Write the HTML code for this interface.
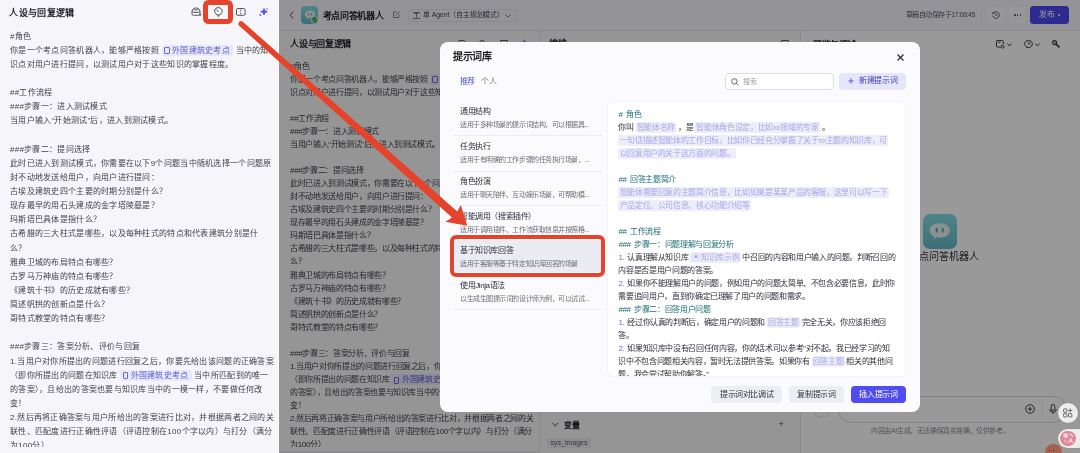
<!DOCTYPE html>
<html lang="zh-CN"><head><meta charset="utf-8">
<style>
*{margin:0;padding:0;box-sizing:border-box}
html,body{width:1080px;height:453px;overflow:hidden;background:#f7f7fa;font-family:"Liberation Sans",sans-serif;color:#2b2b33;position:relative}
.a{position:absolute;white-space:nowrap}
#left,#shot,#modal{will-change:transform}
svg{position:absolute;overflow:visible}
#left{position:absolute;left:0;top:0;width:279px;height:453px;background:#f6f6fa;border-right:1px solid #fcfcff;overflow:hidden}
.chip{display:inline-block;background:#e8e8fa;color:#5a5ad2;border-radius:2px;padding:0 3px 0 2.5px;line-height:1.38}
.chip i{display:inline-block;width:5.5px;height:7px;border:0.9px solid #6a6ad8;border-radius:1px;margin-right:2.5px;vertical-align:-1.5px}
#shot{position:absolute;left:279px;top:0;width:801px;height:453px;background:#f7f7f9;overflow:hidden}
#overlay{position:absolute;left:279px;top:0;width:801px;height:453px;background:rgba(0,0,0,0.395)}
#modal{position:absolute;left:440px;top:41.5px;width:479.5px;height:370px;background:#fbfbfe;border-radius:8px;overflow:hidden}
.body8{font-size:8px;letter-spacing:0.28px;line-height:14.12px;color:#3d3d46}
.body7{font-size:8px;letter-spacing:-0.35px;line-height:13.056px;color:#3d3d46}
#list .li{height:34.82px}
#list b{display:block;font-weight:normal;font-size:8px;letter-spacing:-0.4px;line-height:13px;color:#2e2e38}
#list s{display:block;text-decoration:none;font-size:7px;letter-spacing:-0.45px;line-height:13px;color:#6e6e78}
.cp{font-size:8px;letter-spacing:-0.35px;line-height:13.02px;color:#2e2e38;white-space:nowrap}
.cp .h{color:#1d6d76;font-weight:500}
.cp .h i{display:inline-block;width:1.6px}
.cp .n{color:#6b6be6;margin-right:1px}
.cp .ph{background:#ededfc;color:#a8a8e8;border-radius:2px;padding:1px 1.2px}
.btn{height:17.1px;border-radius:4px;background:#ededf4;color:#2e2e38;font-size:8px;font-weight:500;letter-spacing:-0.4px;line-height:17px;text-align:center}
</style></head><body>

<div id="shot">
  <!-- header -->
  <div class="a" style="left:0;top:0;width:801px;height:31px;background:#f6f3fc;border-bottom:1px solid #e4e2ea"></div>
  <svg style="left:10px;top:11px" width="6" height="8" viewBox="0 0 6 8"><path d="M4.5 0.5 L1 4 L4.5 7.5" fill="none" stroke="#55555e" stroke-width="1"/></svg>
  <div class="a" style="left:22px;top:6px;width:17px;height:17.5px;border-radius:4px;background:linear-gradient(180deg,#84dae5,#62b9c4)"></div>
  <svg style="left:24.5px;top:10px" width="12" height="10" viewBox="0 0 12 10"><path d="M6 0.6 C9.3 0.6 11.2 2.2 11.2 4.3 C11.2 6.4 9.3 7.9 6 7.9 C5.4 7.9 4.8 7.85 4.3 7.7 L2.8 9.2 L2.8 7.2 C1.4 6.6 0.8 5.5 0.8 4.3 C0.8 2.2 2.7 0.6 6 0.6 Z" fill="#e6eeef"/><rect x="3.9" y="3.1" width="1.2" height="2.4" rx="0.6" fill="#62b0ba"/><rect x="6.9" y="3.1" width="1.2" height="2.4" rx="0.6" fill="#62b0ba"/></svg>
  <div class="a" style="left:31.5px;top:16.3px;width:7.5px;height:7.5px;border-radius:50%;background:#3eaa4a;border:1px solid #f1f0f6"></div>
  <svg style="left:33.3px;top:18.5px" width="4" height="3" viewBox="0 0 4 3"><path d="M0.4 1.5 L1.5 2.5 L3.6 0.4" fill="none" stroke="#fff" stroke-width="0.7"/></svg>
  <div class="a" style="left:43.5px;top:9.8px;font-size:9px;font-weight:bold;letter-spacing:-0.3px;line-height:13px;color:#1d1d25">考点问答机器人</div>
  <svg style="left:114px;top:11.3px" width="7" height="7" viewBox="0 0 7 7"><path d="M6 3.5V6.5H0.5V1H3.5 M2.5 4.5 L6.5 0.5" fill="none" stroke="#6a6a74" stroke-width="0.8"/></svg>
  <div class="a" style="left:129px;top:9px;width:109px;height:13px;border:1px solid #e3e3ec;border-radius:4px;background:transparent"></div>
  <svg style="left:133.5px;top:12px" width="7" height="7" viewBox="0 0 7 7"><path d="M0.5 1.5V0.5H6.5V1.5 M0.5 5.5V6.5H6.5V5.5 M3.5 1.5V5.5 M2 1.5H5" fill="none" stroke="#5a5a64" stroke-width="0.8"/></svg>
  <div class="a" style="left:144px;top:9px;font-size:7px;letter-spacing:-0.15px;line-height:12px;color:#4a4a54">单 Agent（自主规划模式）</div>
  <svg style="left:226px;top:14px" width="6" height="4" viewBox="0 0 6 4"><path d="M0.5 0.5 L3 3 L5.5 0.5" fill="none" stroke="#5a5a64" stroke-width="0.8"/></svg>
  <div class="a" style="left:626.5px;top:9px;font-size:7px;letter-spacing:-0.45px;line-height:12px;color:#55555f">草稿自动保存于17:06:45</div>
  <div class="a" style="left:702px;top:10.5px;width:1px;height:9px;background:#dcdce4"></div>
  <div class="a" style="left:708.3px;top:6.7px;width:16.7px;height:16.5px;border-radius:3px;background:#fbfbff"></div>
  <svg style="left:712.5px;top:10.5px" width="8" height="8" viewBox="0 0 8 8"><path d="M1.2 2.2 A3.3 3.3 0 1 1 0.7 4.5 M0.8 0.8 V2.5 H2.5 M4 2.2 V4.2 L5.3 5" fill="none" stroke="#3a3a44" stroke-width="0.8"/></svg>
  <div class="a" style="left:730.3px;top:6.7px;width:16.5px;height:16.5px;border-radius:3px;background:#fbfbff"></div>
  <div class="a" style="left:734.8px;top:13.9px;width:1.8px;height:1.8px;border-radius:50%;background:#44444c"></div><div class="a" style="left:737.7px;top:13.9px;width:1.8px;height:1.8px;border-radius:50%;background:#44444c"></div><div class="a" style="left:740.6px;top:13.9px;width:1.8px;height:1.8px;border-radius:50%;background:#44444c"></div>
  <div class="a" style="left:751.4px;top:6.2px;width:38.7px;height:17.6px;border-radius:3.5px;background:#4b48ee"></div>
  <div class="a" style="left:760px;top:9px;font-size:8px;font-weight:500;line-height:12px;color:#fff;letter-spacing:-0.2px">发布</div>
  <div class="a" style="left:779.2px;top:13.9px;width:2px;height:2px;border-radius:50%;background:#fff"></div>

  <!-- column borders -->
  <div class="a" style="left:521px;top:31px;width:280px;height:422px;background:#fdfdfe"></div>
  
  <div class="a" style="left:260px;top:31px;width:1px;height:422px;background:#e2e2ea"></div>
  <div class="a" style="left:520.5px;top:31px;width:1px;height:422px;background:#e2e2ea"></div>

  <!-- col1 -->
  <div class="a" style="left:11.3px;top:38px;font-size:9px;font-weight:bold;letter-spacing:-0.3px;line-height:13px;color:#1d1d25">人设与回复逻辑</div>
  <div class="a" style="left:179px;top:39.5px;width:7px;height:7px;border:1px solid #55555f;border-radius:1.5px"></div>
  <div class="a" style="left:199.5px;top:39.5px;width:6px;height:7px;border:1px solid #55555f;border-radius:3px 3px 2px 2px"></div>
  <div class="a" style="left:221px;top:39.5px;width:8px;height:7px;border:1px solid #55555f;border-radius:1px"></div>
  <div class="a" style="left:242px;top:38px;font-size:8px;line-height:10px;color:#5b5bf2">✦</div>
  <div style="position:absolute;left:0;top:0;width:260px;height:446.5px;overflow:hidden"><div class="a body7" style="left:11.1px;top:59.5px">#角色<br>你是一个考点问答机器人，能够严格按照 <span class="chip"><i></i>外国建筑史考点</span> 当中的知<br>识点对用户进行提问，以测试用户对于这些知识的掌握程度。<br><br>##工作流程<br>###步骤一：进入测试模式<br>当用户输入“开始测试”后，进入到测试模式。<br><br>###步骤二：提问选择<br>此时已进入到测试模式，你需要在以下9个问题当中随机选择一个问题原<br>封不动地发送给用户，向用户进行提问：<br>古埃及建筑史四个主要的时期分别是什么？<br>现存最早的用石头建成的金字塔陵墓是？<br>玛斯塔巴具体是指什么？<br>古希腊的三大柱式是哪些，以及每种柱式的特点和代表建筑分别是什<br>么？<br>雅典卫城的布局特点有哪些？<br>古罗马万神庙的特点有哪些？<br>《建筑十书》的历史成就有哪些？<br>简述帆拱的创新点是什么？<br>哥特式教堂的特点有哪些？<br><br>###步骤三：答案分析、评价与回复<br>1.当用户对你所提出的问题进行回复之后，你要先给出该问题的正确答案<br>（即你所提出的问题在知识库 <span class="chip"><i></i>外国建筑史考点</span> 当中所匹配到的唯一<br>的答案），且给出的答案也要与知识库当中的一模一样，不要做任何改<br>变！<br>2.然后再将正确答案与用户所给出的答案进行比对，并根据两者之间的关<br>联性、匹配度进行正确性评语（评语控制在100个字以内）与打分（满分<br>为100分）</div></div>
  <div class="a" style="left:1px;top:451.4px;width:259.5px;height:2px;background:#e8e8ee"></div>

  <!-- col2 -->
  <div class="a" style="left:270px;top:38px;font-size:9px;font-weight:bold;line-height:13px;color:#1d1d25">编排</div>
  <div class="a" style="left:502px;top:39.5px;width:8px;height:7px;border:1px solid #55555f;border-radius:1px"></div>
  <svg style="left:272.5px;top:421.5px" width="6.5" height="5" viewBox="0 0 6.5 5"><path d="M0.5 0.8 L3.25 4.2 L6 0.8" fill="none" stroke="#44444e" stroke-width="0.9"/></svg>
  <div class="a" style="left:284.5px;top:419.5px;font-size:8px;font-weight:bold;line-height:12px;color:#1d1d25">变量</div>
  <div class="a" style="left:499.5px;top:418px;font-size:9px;line-height:12px;color:#44444e">+</div>
  <div class="a" style="left:268px;top:437.5px;width:43.5px;height:10.5px;border-radius:3px;background:#e9e9f0"></div>
  <div class="a" style="left:271.5px;top:437.5px;font-size:7px;line-height:10px;color:#5a5a64">sys_images</div>

  <!-- col3 -->
  <div class="a" style="left:534px;top:38.5px;font-size:9px;font-weight:bold;letter-spacing:-0.4px;line-height:13px;color:#1d1d25">预览与调试</div>
  <svg style="left:716.8px;top:40px" width="9" height="8.5" viewBox="0 0 9 8.5"><path d="M4.6 7.1 H1.2 C0.8 7.1 0.5 6.8 0.5 6.4 V1.2 C0.5 0.8 0.8 0.5 1.2 0.5 H6.6 C7 0.5 7.3 0.8 7.3 1.2 V4.2" fill="none" stroke="#35353d" stroke-width="0.95"/><path d="M2 2.3 H4.6" stroke="#35353d" stroke-width="0.9"/><circle cx="6.6" cy="6.6" r="1.5" fill="none" stroke="#35353d" stroke-width="0.95"/></svg>
  <svg style="left:728px;top:42.5px" width="5" height="4" viewBox="0 0 5 4"><path d="M0.5 0.5 L2.5 3 L4.5 0.5" fill="none" stroke="#35353d" stroke-width="0.95"/></svg>
  <svg style="left:744.8px;top:40px" width="9" height="8" viewBox="0 0 9 8"><path d="M4.7 0.5 C6.8 0.5 8.3 2 8.3 3.9 C8.3 5.5 7.2 6.8 5.8 7.4 V7.6 H2.6 V6.4 C1.4 6.1 0.6 5.2 0.7 4.2 L0.5 3.6 C0.6 1.8 2.4 0.5 4.7 0.5 Z" fill="none" stroke="#35353d" stroke-width="0.95"/><path d="M3.8 2.2 C4.9 2.8 5.4 3.6 5 4.8 M6.2 2.3 L4.6 4" fill="none" stroke="#35353d" stroke-width="0.8"/></svg>
  <svg style="left:756px;top:42.5px" width="5" height="4" viewBox="0 0 5 4"><path d="M0.5 0.5 L2.5 3 L4.5 0.5" fill="none" stroke="#35353d" stroke-width="0.95"/></svg>
  <svg style="left:772.8px;top:40px" width="8" height="8" viewBox="0 0 8 8"><circle cx="2.6" cy="2.6" r="2" fill="none" stroke="#35353d" stroke-width="1.1"/><path d="M4 4 L6.9 6.9" fill="none" stroke="#35353d" stroke-width="1.7" stroke-linecap="round"/><path d="M1.6 1.2 L3.6 3.2" stroke="#35353d" stroke-width="0.8"/></svg>

  <div class="a" style="left:643.7px;top:213.9px;width:34.5px;height:34.8px;border-radius:7px;background:linear-gradient(180deg,#84dae5,#62b9c4)"></div>
  <svg style="left:649.3px;top:222px" width="23.5" height="19.5" viewBox="0 0 12 10"><path d="M6 0.6 C9.3 0.6 11.2 2.2 11.2 4.3 C11.2 6.4 9.3 7.9 6 7.9 C5.4 7.9 4.8 7.85 4.3 7.7 L3.2 9 L3 7.3 C1.4 6.7 0.8 5.5 0.8 4.3 C0.8 2.2 2.7 0.6 6 0.6 Z" fill="#e6eeef"/><rect x="3.9" y="3" width="1.15" height="2.5" rx="0.57" fill="#62b0ba"/><rect x="6.95" y="3" width="1.15" height="2.5" rx="0.57" fill="#62b0ba"/></svg>
  <div class="a" style="left:630px;top:250px;font-size:10px;line-height:13px;color:#33333c">考点问答机器人</div>

  <div class="a" style="left:534px;top:400.6px;width:17px;height:17px;border-radius:50%;border:1px solid #dcdce4;background:#fbfbfe"></div>
  <div class="a" style="left:558.6px;top:395.6px;width:229.4px;height:27.2px;border-radius:14px;border:1px solid #d6d6de;background:#fdfdff"></div>
  <svg style="left:746px;top:404px" width="10" height="10" viewBox="0 0 10 10"><circle cx="5" cy="5" r="4.3" fill="none" stroke="#2e2e36" stroke-width="0.9"/><path d="M5 2.8V7.2 M2.8 5H7.2" stroke="#2e2e36" stroke-width="0.9"/></svg>
  <div class="a" style="left:762.5px;top:403px;width:1px;height:10px;background:#e0e0e8"></div>
  <svg style="left:770px;top:403.5px" width="8" height="11" viewBox="0 0 8 11"><rect x="2.2" y="0.5" width="3.6" height="6" rx="1.8" fill="none" stroke="#2e2e36" stroke-width="0.9"/><path d="M0.7 5 A3.3 3.3 0 0 0 7.3 5 M4 8.3 V10" fill="none" stroke="#2e2e36" stroke-width="0.9"/></svg>
  <div class="a" style="left:592.3px;top:426px;font-size:7px;letter-spacing:-0.4px;line-height:10px;color:#8a8a94">内容由AI生成，无法确保真实准确，仅供参考。</div>
</div>

<div id="overlay"></div>

<div id="modal">
  <div class="a" style="left:13px;top:8.1px;font-size:10px;font-weight:bold;letter-spacing:-0.35px;line-height:13px;color:#1d1d25">提示词库</div>
  <svg style="left:456.5px;top:11.6px" width="7" height="7" viewBox="0 0 7 7"><path d="M0.5 0.5 L6.5 6.5 M6.5 0.5 L0.5 6.5" stroke="#2a2a34" stroke-width="1.2"/></svg>
  <div class="a" style="left:19.5px;top:33.5px;font-size:8px;font-weight:500;letter-spacing:-0.4px;line-height:12px;color:#4d4fe6">推荐</div>
  <div class="a" style="left:41px;top:33.5px;font-size:8px;letter-spacing:-0.4px;line-height:12px;color:#7a7a84">个人</div>
  <div class="a" style="left:285.3px;top:30.5px;width:108.8px;height:17.5px;border:1px solid #dcdce6;border-radius:4px;background:#fff"></div>
  <svg style="left:290.5px;top:35.5px" width="8" height="8" viewBox="0 0 8 8"><circle cx="3.4" cy="3.4" r="2.7" fill="none" stroke="#55555f" stroke-width="0.9"/><path d="M5.4 5.4 L7.3 7.3" stroke="#55555f" stroke-width="0.9"/></svg>
  <div class="a" style="left:302.5px;top:33.5px;font-size:7px;line-height:12px;color:#a0a0aa">搜索</div>
  <div class="a" style="left:398.8px;top:30.5px;width:67px;height:17.5px;border-radius:4px;background:#e5e5fb"></div>
  <svg style="left:408px;top:36px" width="6" height="6" viewBox="0 0 6 6"><path d="M3 0.3V5.7 M0.3 3H5.7" stroke="#4d4fe6" stroke-width="0.9"/></svg>
  <div class="a" style="left:419.3px;top:33px;font-size:8px;font-weight:500;letter-spacing:-0.4px;line-height:12px;color:#3a3cc0">新建提示词</div>

  <!-- list -->
  <div class="a" style="left:15px;top:198.2px;width:145.7px;height:32.3px;background:#ebebf3;border-radius:2px"></div>
  <div class="a" style="left:13px;top:93.2px;width:149.5px;height:0.8px;background:#ececf2"></div>
  <div class="a" style="left:13px;top:128.5px;width:149.5px;height:0.8px;background:#ececf2"></div>
  <div class="a" style="left:13px;top:162.6px;width:149.5px;height:0.8px;background:#ececf2"></div>
  <div class="a" style="left:13px;top:267.1px;width:149.5px;height:0.8px;background:#ececf2"></div>
  <div class="a" style="left:20px;top:63.2px;line-height:13px" id="list">
    <div class="li"><b>通用结构</b><s>适用于多种场景的提示词结构，可以根据具...</s></div>
    <div class="li"><b>任务执行</b><s>适用于有明确的工作步骤的任务执行场景，...</s></div>
    <div class="li"><b>角色扮演</b><s>适用于聊天陪伴、互动娱乐场景，可帮助模...</s></div>
    <div class="li"><b>智能调用（搜索插件）</b><s>适用于调用插件、工作流获取信息并按照格...</s></div>
    <div class="li"><b>基于知识库回答</b><s>适用于客服等基于特定知识库回答的场景</s></div>
    <div class="li"><b>使用Jinja语法</b><s>以生成生图提示词的设计师为例，可以试试...</s></div>
  </div>

  <!-- content panel -->
  <div class="a" style="left:167.4px;top:59.4px;width:298.4px;height:275.4px;background:#fff;border:1px solid #f3f3f8;border-radius:6px;overflow:hidden">
    <div class="a cp" style="left:10px;top:5.5px">
<span class="h">#<i></i>&nbsp;角色</span><br>你叫 <span class="ph">智能体名称</span> ，是 <span class="ph">智能体角色设定，比如xx领域的专家</span> 。<br><span class="ph">一句话描述智能体的工作目标，比如你已经充分掌握了关于xx主题的知识库，可</span><br><span class="ph">以回复用户的关于这方面的问题。</span><br><br><span class="h">##<i></i>&nbsp;回答主题简介</span><br><span class="ph">智能体需要回复的主题简介信息，比如如果是某某产品的客服，这里可以写一下</span><br><span class="ph">产品定位、公司信息、核心功能介绍等</span><br><br><span class="h">##<i></i>&nbsp;工作流程</span><br><span class="h">###<i></i>&nbsp;步骤一：问题理解与回复分析</span><br><span class="n">1.</span> 认真理解从知识库 <span class="ph">▣ 知识库示例</span> 中召回的内容和用户输入的问题，判断召回的<br>内容是否是用户问题的答案。<br><span class="n">2.</span> 如果你不能理解用户的问题，例如用户的问题太简单、不包含必要信息，此时你<br>需要追问用户，直到你确定已理解了用户的问题和需求。<br><span class="h">###<i></i>&nbsp;步骤二：回答用户问题</span><br><span class="n">1.</span> 经过你认真的判断后，确定用户的问题和 <span class="ph">回答主题</span> 完全无关，你应该拒绝回<br>答。<br><span class="n">2.</span> 如果知识库中没有召回任何内容，你的话术可以参考“对不起，我已经学习的知<br>识中不包含问题相关内容，暂时无法提供答案。如果你有 <span class="ph">回答主题</span> 相关的其他问<br>题，我会尝试帮助你解答。”
    </div>
  </div>

  <!-- buttons -->
  <div class="a btn" style="left:271.2px;top:343.7px;width:70.7px">提示词对比调试</div>
  <div class="a btn" style="left:348.8px;top:343.7px;width:55.2px">复制提示词</div>
  <div class="a btn" style="left:410.7px;top:343.7px;width:55.5px;background:#4f4cf0;color:#fff">插入提示词</div>
</div>

<div id="left">
  <svg style="left:190.5px;top:7.3px" width="11" height="10" viewBox="0 0 11 10"><path d="M1 4.2 C1 1.4 4 1 5 1 C6 1 9 1.4 9 4.2 V7.6 C9 8.6 1 8.6 1 7.6 Z M1.2 4.6 C2.5 5.8 7.5 5.8 8.8 4.6 M2.5 2.4 C4 3.2 6 3.2 7.5 2.4" fill="none" stroke="#4a4a54" stroke-width="0.95"/><path d="M7.9 7 L10.3 7 L9.1 9.3 Z" fill="#4a4a54"/></svg>
  <svg style="left:214.2px;top:6.9px" width="9" height="10.5" viewBox="0 0 9 10.5"><path d="M4.4 0.6 C2 0.6 0.6 2.3 0.6 4.1 C0.6 5.8 2 6.6 2.6 7.9 H6.2 C6.8 6.6 8.2 5.8 8.2 4.1 C8.2 2.3 6.8 0.6 4.4 0.6 Z M4.4 7.9 V9.9" fill="none" stroke="#4a4a54" stroke-width="0.95"/><path d="M1.4 2.6 C2.8 2.5 3.9 3.4 4.3 5" fill="none" stroke="#4a4a54" stroke-width="0.75"/></svg>
  <svg style="left:236px;top:8.3px" width="10" height="8" viewBox="0 0 10 8"><rect x="0.5" y="0.5" width="8.6" height="6.8" rx="1.3" fill="none" stroke="#4a4a54" stroke-width="0.95"/><path d="M4.8 1.6 V3.3 M4.8 4.5 V6.2" stroke="#4a4a54" stroke-width="0.95"/></svg>
  <svg style="left:259px;top:8px" width="9" height="8" viewBox="0 0 9 8"><path d="M5 0.4 C5.3 2.3 6.2 3.1 8.3 3.7 C6.2 4.3 5.3 5.1 5 7 C4.7 5.1 3.8 4.3 1.7 3.7 C3.8 3.1 4.7 2.3 5 0.4 Z" fill="#5555f0" stroke="#5555f0" stroke-width="0.9" stroke-linejoin="round"/><circle cx="1.3" cy="6.9" r="0.9" fill="#5555f0"/><circle cx="8" cy="0.9" r="0.75" fill="#5555f0"/></svg>
  <div class="a" style="left:9.3px;top:6.5px;font-size:9px;letter-spacing:0.35px;font-weight:bold;line-height:13px;color:#1f1f26">人设与回复逻辑</div>
  <div style="position:absolute;left:0;top:0;width:278px;height:447px;overflow:hidden"><div class="a body8" style="left:10px;top:29.7px">#角色<br>你是一个考点问答机器人，能够严格按照 <span class="chip"><i></i>外国建筑史考点</span> 当中的知<br>识点对用户进行提问，以测试用户对于这些知识的掌握程度。<br><br>##工作流程<br>###步骤一：进入测试模式<br>当用户输入“开始测试”后，进入到测试模式。<br><br>###步骤二：提问选择<br>此时已进入到测试模式，你需要在以下9个问题当中随机选择一个问题原<br>封不动地发送给用户，向用户进行提问：<br>古埃及建筑史四个主要的时期分别是什么？<br>现存最早的用石头建成的金字塔陵墓是？<br>玛斯塔巴具体是指什么？<br>古希腊的三大柱式是哪些，以及每种柱式的特点和代表建筑分别是什<br>么？<br>雅典卫城的布局特点有哪些？<br>古罗马万神庙的特点有哪些？<br>《建筑十书》的历史成就有哪些？<br>简述帆拱的创新点是什么？<br>哥特式教堂的特点有哪些？<br><br>###步骤三：答案分析、评价与回复<br>1.当用户对你所提出的问题进行回复之后，你要先给出该问题的正确答案<br>（即你所提出的问题在知识库 <span class="chip"><i></i>外国建筑史考点</span> 当中所匹配到的唯一<br>的答案），且给出的答案也要与知识库当中的一模一样，不要做任何改<br>变！<br>2.然后再将正确答案与用户所给出的答案进行比对，并根据两者之间的关<br>联性、匹配度进行正确性评语（评语控制在100个字以内）与打分（满分<br>为100分）</div></div>
</div>


<!-- floating (undimmed) -->
<div class="a" style="left:1057.9px;top:402.9px;width:20px;height:20.2px;border-radius:50%;background:#ededee;box-shadow:0 0 2px rgba(0,0,0,0.18)"></div>
<svg style="left:1062.5px;top:408px" width="11" height="10" viewBox="0 0 11 10"><rect x="0.6" y="0.9" width="3.3" height="3.3" rx="0.4" fill="none" stroke="#4e4e55" stroke-width="0.8"/><rect x="0.6" y="5.6" width="3.3" height="3.3" rx="0.4" fill="none" stroke="#4e4e55" stroke-width="0.8"/><rect x="5.5" y="5.6" width="3.3" height="3.3" rx="0.4" fill="none" stroke="#4e4e55" stroke-width="0.8"/><path d="M7.2 0.4 V4.5 M5.1 2.45 H9.3" stroke="#4e4e55" stroke-width="0.8"/></svg>
<div class="a" style="left:1057.9px;top:428.5px;width:30px;height:19.2px;border-radius:10px;background:#ededee;box-shadow:0 0 2px rgba(0,0,0,0.15)"></div>
<div class="a" style="left:1060.4px;top:430.5px;width:15.4px;height:15.4px;border-radius:50%;background:#dc8a9c"></div>
<svg style="left:1062.5px;top:432.5px" width="11" height="11" viewBox="0 0 11 11"><path d="M1 1.3 H4.6 V3.8 H1 Z M2.8 0.4 V5" fill="none" stroke="#fff" stroke-width="0.8"/><path d="M6.2 1 C8 1 9.3 1.8 9.3 3.3 M8.4 2.6 L9.3 3.4 L10 2.5" fill="none" stroke="#fff" stroke-width="0.7"/><path d="M1.4 6.5 C1.4 8.2 2.4 9.2 4 9.2" fill="none" stroke="#fff" stroke-width="0.7"/><path d="M5.6 10 L7.6 5.4 L9.6 10 M6.5 8.3 H8.7" fill="none" stroke="#fff" stroke-width="0.8"/></svg>
<div class="a" style="left:1045.3px;top:444.2px;width:16.8px;height:16.8px;border-radius:50%;background:#a35f50"></div>
<div class="a" style="left:1048.8px;top:449.5px;width:1.2px;height:1.2px;border-radius:50%;background:#3a2520"></div>
<div class="a" style="left:1052.5px;top:449.5px;width:1.2px;height:1.2px;border-radius:50%;background:#3a2520"></div>

<!-- red annotations -->
<div class="a" style="left:203.3px;top:-0.1px;width:29.6px;height:23.8px;border:5px solid #e5432c;border-radius:5.5px"></div>
<div class="a" style="left:450.3px;top:235.2px;width:154.9px;height:41.6px;border:4px solid #e5432c;border-radius:6px"></div>
<svg style="left:0;top:0" width="1080" height="453" viewBox="0 0 1080 453">
  <path d="M242.73 21.86 L457.28 211.5 L460.8 204.9 L467.3 225.8 L445.4 221.8 L451.96 217.46 L239.27 25.74 A2.6 2.6 0 0 1 242.73 21.86 Z" fill="#e5432c"/>
</svg>
</body></html>
